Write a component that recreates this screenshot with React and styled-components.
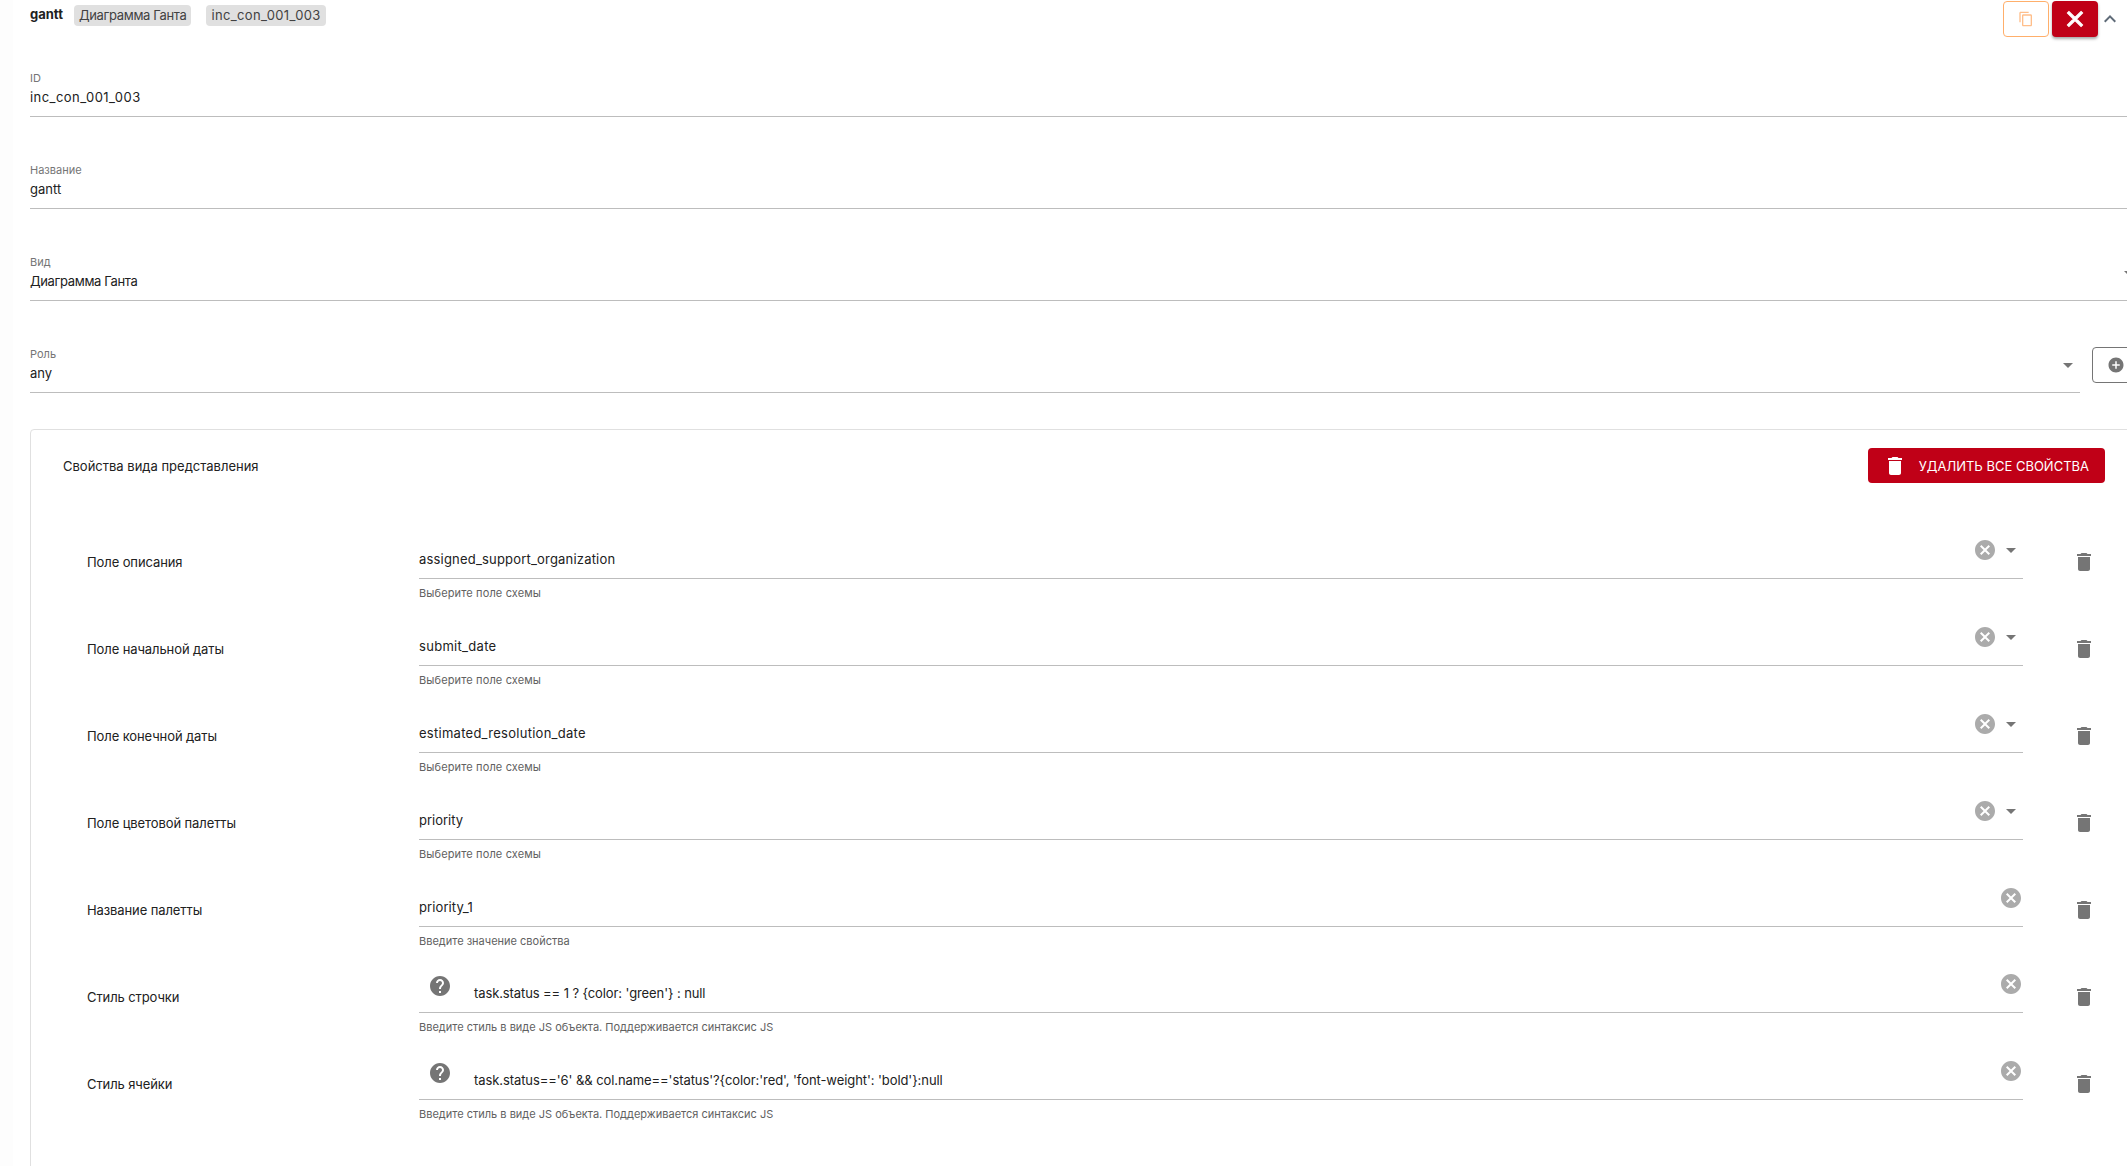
import React from "react";
import styled, { createGlobalStyle } from "styled-components";

const GlobalStyle = createGlobalStyle`
  html, body {
    margin: 0;
    padding: 0;
    background: #fff;
    overflow: hidden;
  }
  body {
    font-family: Inter, "Liberation Sans", sans-serif;
    color: #212121;
  }
`

const Page = styled.div`
  display: flex;
  width: 2127px;
  height: 1166px;
  overflow: hidden;
`

const Gutter = styled.div`
  flex: none;
  width: 13px;
  background: #fdfdfd;
`

const Panel = styled.div`
  flex: none;
  width: 2111px;
  margin-left: 17px;
`

const Header = styled.div`
  display: flex;
  align-items: flex-start;
  width: 2092px;
  height: 37px;
  margin-bottom: 34px;
`

const Title = styled.div`
  width: 44px;
  font-size: 13px;
  font-weight: 700;
  line-height: 20px;
  margin-top: 4px;
`

const Chip = styled.div`
  height: 21px;
  line-height: 21px;
  margin: 5px 15px 0 0;
  padding: 0 5px;
  font-size: 13px;
  letter-spacing: ${(p) => p.$spacing || 0}px;
  color: #424242;
  background: #e0e0e0;
  border-radius: 4px;
`

const HeaderActions = styled.div`
  display: flex;
  align-items: flex-start;
  margin-left: auto;
  margin-top: 1px;
`

const CopyButton = styled.div`
  display: flex;
  align-items: center;
  justify-content: center;
  width: 46px;
  height: 36px;
  box-sizing: border-box;
  border: 1px solid #ffaf6b;
  border-radius: 4px;
  color: #ffbe8a;
`

const CloseButton = styled.div`
  display: flex;
  align-items: center;
  justify-content: center;
  width: 46px;
  height: 36px;
  margin-left: 3px;
  color: #fff;
  background: #c00017;
  border-radius: 4px;
  box-shadow: 0 2px 3px rgba(0, 0, 0, 0.35);
`

const Collapse = styled.div`
  display: flex;
  margin-top: 6px;
  color: #5f6b78;
`

const Fields = styled.div`
  display: flex;
  flex-direction: column;
  gap: 46px;
`

const FieldRow = styled.div`
  display: flex;
  align-items: flex-start;
  gap: 12px;
`

const Field = styled.div`
  flex: 1 1 auto;
  height: 46px;
  box-sizing: border-box;
  border-bottom: 1px solid #bdbdbd;
`

const FieldLabel = styled.div`
  font-size: 11px;
  line-height: 14px;
  margin-bottom: 2px;
  color: #757575;
`

const ValueRow = styled.div`
  display: flex;
  align-items: flex-start;
`

const Value = styled.div`
  flex: 1;
  font-size: 13px;
  line-height: 20px;
  letter-spacing: ${(p) => p.$spacing || 0}px;
`

const FieldArrow = styled.div`
  display: flex;
  margin-top: -10px;
  color: #757575;
`

const AddButton = styled.div`
  display: flex;
  align-items: center;
  justify-content: center;
  flex: none;
  width: 49px;
  height: 36px;
  padding-right: 2px;
  box-sizing: border-box;
  border: 1px solid #757575;
  border-radius: 4px;
  color: #757575;
`

const Card = styled.div`
  margin-top: 36px;
  padding: 18px 35px 60px 32px;
  border: 1px solid #e0e0e0;
  border-radius: 4px;
`

const CardHeader = styled.div`
  display: flex;
  align-items: center;
  justify-content: space-between;
  margin-bottom: 36px;
`

const CardTitle = styled.div`
  font-size: 13px;
  line-height: 20px;
  color: #212121;
`

const DangerButton = styled.div`
  display: flex;
  align-items: center;
  gap: 12px;
  height: 35px;
  padding: 0 16px 0 15px;
  font-size: 13px;
  text-transform: uppercase;
  color: #fff;
  background: #c00017;
  border-radius: 4px;
`

const Rows = styled.div`
  padding-left: 24px;
`

const Row = styled.div`
  display: grid;
  grid-template-columns: 332px 1fr 82px;
  height: 86.9px;
`

const RowLabel = styled.div`
  align-self: center;
  font-size: 13px;
  line-height: 20px;
  letter-spacing: -0.1px;
`

const InputColumn = styled.div`
  display: flex;
  flex-direction: column;
`

const InputBox = styled.div`
  display: flex;
  align-items: flex-end;
  height: 60px;
  box-sizing: border-box;
  border-bottom: 1px solid #bdbdbd;
`

const InputValue = styled.div`
  flex: 1;
  margin-left: ${(p) => (p.$indented ? "22px" : "0")};
  padding-bottom: 9px;
  font-size: 13px;
  line-height: 20px;
  letter-spacing: ${(p) => p.$spacing || 0}px;
`

const IconSlot = styled.div`
  display: flex;
  justify-content: center;
  width: ${(p) => (p.$gap ? "26px" : "24px")};
  padding-right: ${(p) => (p.$gap ? "2px" : "0")};
  box-sizing: border-box;
  margin-bottom: 16px;
  color: ${(p) => (p.$light ? "#ababab" : "#757575")};
`

const HelpSlot = styled.div`
  display: flex;
  margin: 0 0 14px 9px;
  color: #757575;
`

const Helper = styled.div`
  margin-top: 7px;
  font-size: 11px;
  line-height: 14px;
  letter-spacing: ${(p) => p.$spacing || 0}px;
  color: #616161;
`

const RowTrash = styled.div`
  display: flex;
  align-self: center;
  justify-self: start;
  margin-left: 49px;
  color: #757575;
`

const Icon = ({ d, size = 24, bold }) => (
  <svg width={size} height={size} viewBox="0 0 24 24" fill="currentColor" stroke={bold ? "currentColor" : "none"} strokeWidth={bold ? 1 : 0}>
    <path d={d} />
  </svg>
)

const TRASH = "M6 19c0 1.1.9 2 2 2h8c1.1 0 2-.9 2-2V7H6v12zM19 4h-3.5l-1-1h-5l-1 1H5v2h14V4z"
const CANCEL = "M12 2C6.47 2 2 6.47 2 12s4.47 10 10 10 10-4.47 10-10S17.53 2 12 2zm5 13.59L15.59 17 12 13.41 8.41 17 7 15.59 10.59 12 7 8.41 8.41 7 12 10.59 15.59 7 17 8.41 13.41 12 17 15.59z"
const HELP = "M12 2C6.48 2 2 6.48 2 12s4.48 10 10 10 10-4.48 10-10S17.52 2 12 2zm1 17h-2v-2h2v2zm2.07-7.75l-.9.92C13.45 12.9 13 13.5 13 15h-2v-.5c0-1.1.45-2.1 1.17-2.83l1.24-1.26c.37-.36.59-.86.59-1.41 0-1.1-.9-2-2-2s-2 .9-2 2H8c0-2.21 1.79-4 4-4s4 1.79 4 4c0 .88-.36 1.68-.93 2.25z"
const ARROW = "M7 10l5 5 5-5z"
const ADD = "M12 2C6.48 2 2 6.48 2 12s4.48 10 10 10 10-4.48 10-10S17.52 2 12 2zm5 11h-4v4h-2v-4H7v-2h4V7h2v4h4v2z"
const COPY = "M16 1H4c-1.1 0-2 .9-2 2v14h2V3h12V1zm3 4H8c-1.1 0-2 .9-2 2v14c0 1.1.9 2 2 2h11c1.1 0 2-.9 2-2V7c0-1.1-.9-2-2-2zm0 16H8V7h11v14z"
const CLOSE = "M19 6.41L17.59 5 12 10.59 6.41 5 5 6.41 10.59 12 5 17.59 6.41 19 12 13.41 17.59 19 19 17.59 13.41 12z"
const CHEVRON = "M12 8l-6 6 1.41 1.41L12 10.83l4.59 4.58L18 14z"

const SCHEMA_HINT = "Выберите поле схемы"
const JS_HINT = "Введите стиль в виде JS объекта. Поддерживается синтаксис JS"

const rows = [
  { label: "Поле описания", value: "assigned_support_organization", spacing: 0.19, hint: SCHEMA_HINT, select: true },
  { label: "Поле начальной даты", value: "submit_date", spacing: 0.3, hint: SCHEMA_HINT, select: true },
  { label: "Поле конечной даты", value: "estimated_resolution_date", spacing: 0.27, hint: SCHEMA_HINT, select: true },
  { label: "Поле цветовой палетты", value: "priority", hint: SCHEMA_HINT, select: true },
  { label: "Название палетты", value: "priority_1", spacing: 0.1, hint: "Введите значение свойства" },
  { label: "Стиль строчки", value: "task.status == 1 ? {color: 'green'} : null", spacing: -0.1, hint: JS_HINT, help: true },
  { label: "Стиль ячейки", value: "task.status=='6' && col.name=='status'?{color:'red', 'font-weight': 'bold'}:null", spacing: -0.08, hint: JS_HINT, help: true },
]

const PropertyRow = ({ row }) => (
  <Row>
    <RowLabel>{row.label}</RowLabel>
    <InputColumn>
      <InputBox>
        {row.help && <HelpSlot><Icon d={HELP} /></HelpSlot>}
        <InputValue $indented={row.help} $spacing={row.spacing}>{row.value}</InputValue>
        <IconSlot $light $gap={row.select}><Icon d={CANCEL} /></IconSlot>
        {row.select && <IconSlot><Icon d={ARROW} /></IconSlot>}
      </InputBox>
      <Helper $spacing={row.hint === SCHEMA_HINT ? 0.13 : 0}>{row.hint}</Helper>
    </InputColumn>
    <RowTrash><Icon d={TRASH} /></RowTrash>
  </Row>
)

const App = () => {
  return (
    <Page>
      <GlobalStyle />
      <Gutter />
      <Panel>
        <Header>
          <Title>gantt</Title>
          <Chip $spacing={-0.36}>Диаграмма Ганта</Chip>
          <Chip $spacing={0.36}>inc_con_001_003</Chip>
          <HeaderActions>
            <CopyButton><Icon d={COPY} size={16} /></CopyButton>
            <CloseButton><Icon d={CLOSE} size={26} bold /></CloseButton>
            <Collapse><Icon d={CHEVRON} /></Collapse>
          </HeaderActions>
        </Header>
        <Fields>
          <Field>
            <FieldLabel>ID</FieldLabel>
            <ValueRow><Value $spacing={0.45}>inc_con_001_003</Value></ValueRow>
          </Field>
          <Field>
            <FieldLabel>Название</FieldLabel>
            <ValueRow><Value>gantt</Value></ValueRow>
          </Field>
          <Field>
            <FieldLabel>Вид</FieldLabel>
            <ValueRow>
              <Value $spacing={-0.36}>Диаграмма Ганта</Value>
              <FieldArrow><Icon d={ARROW} /></FieldArrow>
            </ValueRow>
          </Field>
          <FieldRow>
            <Field>
              <FieldLabel>Роль</FieldLabel>
              <ValueRow>
                <Value>any</Value>
                <FieldArrow><Icon d={ARROW} /></FieldArrow>
              </ValueRow>
            </Field>
            <AddButton><Icon d={ADD} size={18} /></AddButton>
          </FieldRow>
        </Fields>
        <Card>
          <CardHeader>
            <CardTitle>Свойства вида представления</CardTitle>
            <DangerButton><Icon d={TRASH} />Удалить все свойства</DangerButton>
          </CardHeader>
          <Rows>
            {rows.map((row) => (
              <PropertyRow key={row.label} row={row} />
            ))}
          </Rows>
        </Card>
      </Panel>
    </Page>
  )
}

export default App
